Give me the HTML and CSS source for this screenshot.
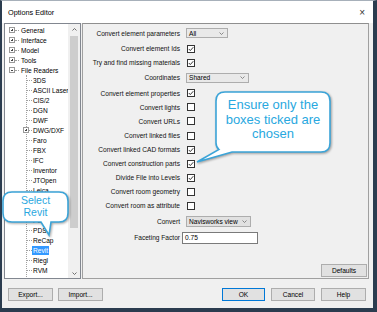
FILE: index.html
```html
<!DOCTYPE html>
<html>
<head>
<meta charset="utf-8">
<link rel="stylesheet" href="styles.css">
</head>
<body>
<div class="window">
  <div class="titlebar"><span class="title">Options Editor</span><span class="close">×</span></div>
  <div class="main">
    <div class="tree">
      <div class="tree-list">
        <div class="node top"><span class="exp plus"></span><span class="dots"></span><span class="lbl">General</span></div>
        <div class="node top"><span class="exp plus"></span><span class="dots"></span><span class="lbl">Interface</span></div>
        <div class="node top"><span class="exp plus"></span><span class="dots"></span><span class="lbl">Model</span></div>
        <div class="node top"><span class="exp plus"></span><span class="dots"></span><span class="lbl">Tools</span></div>
        <div class="node top"><span class="exp minus"></span><span class="dots"></span><span class="lbl">File Readers</span></div>
        <div class="children">
          <div class="node child"><span class="hline"></span><span class="lbl">3DS</span></div>
          <div class="node child"><span class="hline"></span><span class="lbl">ASCII Laser</span></div>
          <div class="node child"><span class="hline"></span><span class="lbl">CIS/2</span></div>
          <div class="node child"><span class="hline"></span><span class="lbl">DGN</span></div>
          <div class="node child"><span class="hline"></span><span class="lbl">DWF</span></div>
          <div class="node child"><span class="exp plus sub"></span><span class="hline"></span><span class="lbl">DWG/DXF</span></div>
          <div class="node child"><span class="hline"></span><span class="lbl">Faro</span></div>
          <div class="node child"><span class="hline"></span><span class="lbl">FBX</span></div>
          <div class="node child"><span class="hline"></span><span class="lbl">IFC</span></div>
          <div class="node child"><span class="hline"></span><span class="lbl">Inventor</span></div>
          <div class="node child"><span class="hline"></span><span class="lbl">JTOpen</span></div>
          <div class="node child"><span class="hline"></span><span class="lbl">Leica</span></div>
          <div class="node child"><span class="hline"></span><span class="lbl">MAN</span></div>
          <div class="node child"><span class="hline"></span><span class="lbl">NX</span></div>
          <div class="node child"><span class="hline"></span><span class="lbl">PDF</span></div>
          <div class="node child"><span class="hline"></span><span class="lbl">PDS</span></div>
          <div class="node child"><span class="hline"></span><span class="lbl">ReCap</span></div>
          <div class="node child"><span class="hline"></span><span class="lbl selected">Revit</span></div>
          <div class="node child"><span class="hline"></span><span class="lbl">Riegl</span></div>
          <div class="node child"><span class="hline"></span><span class="lbl">RVM</span></div>
          <div class="node child"><span class="hline"></span><span class="lbl">SAT</span></div>
        </div>
      </div>
      <div class="vscroll">
        <div class="arrow-box"><svg width="5" height="3" viewBox="0 0 5 3"><polyline points="0.5,2.5 2.5,0.5 4.5,2.5" fill="none" stroke="#606060" stroke-width="0.9"/></svg></div>
        <div class="thumb"></div>
        <div class="spacer"></div>
        <div class="arrow-box"><svg width="5" height="3" viewBox="0 0 5 3"><polyline points="0.5,0.5 2.5,2.5 4.5,0.5" fill="none" stroke="#606060" stroke-width="0.9"/></svg></div>
      </div>
    </div>
    <div class="panel">
      <div class="props">
        <div class="row dd"><span class="lbl-r">Convert element parameters</span><span class="ctl"><span class="dd-box w-all"><span>All</span><svg class="chev" width="5" height="3" viewBox="0 0 5 3"><polyline points="0.5,0.5 2.5,2.5 4.5,0.5" fill="none" stroke="#707070" stroke-width="0.8"/></svg></span></span></div>
        <div class="row"><span class="lbl-r">Convert element Ids</span><span class="ctl"><span class="cb"><svg width="6" height="6" viewBox="0 0 6 6"><polyline points="0.8,3 2.3,4.6 5.3,1.2" fill="none" stroke="#222" stroke-width="0.9"/></svg></span></span></div>
        <div class="row"><span class="lbl-r">Try and find missing materials</span><span class="ctl"><span class="cb"><svg width="6" height="6" viewBox="0 0 6 6"><polyline points="0.8,3 2.3,4.6 5.3,1.2" fill="none" stroke="#222" stroke-width="0.9"/></svg></span></span></div>
        <div class="row dd"><span class="lbl-r">Coordinates</span><span class="ctl"><span class="dd-box w-shared"><span>Shared</span><svg class="chev" width="5" height="3" viewBox="0 0 5 3"><polyline points="0.5,0.5 2.5,2.5 4.5,0.5" fill="none" stroke="#707070" stroke-width="0.8"/></svg></span></span></div>
        <div class="row"><span class="lbl-r">Convert element properties</span><span class="ctl"><span class="cb"><svg width="6" height="6" viewBox="0 0 6 6"><polyline points="0.8,3 2.3,4.6 5.3,1.2" fill="none" stroke="#222" stroke-width="0.9"/></svg></span></span></div>
        <div class="row"><span class="lbl-r">Convert lights</span><span class="ctl"><span class="cb"></span></span></div>
        <div class="row"><span class="lbl-r">Convert URLs</span><span class="ctl"><span class="cb"></span></span></div>
        <div class="row"><span class="lbl-r">Convert linked files</span><span class="ctl"><span class="cb"></span></span></div>
        <div class="row"><span class="lbl-r">Convert linked CAD formats</span><span class="ctl"><span class="cb"><svg width="6" height="6" viewBox="0 0 6 6"><polyline points="0.8,3 2.3,4.6 5.3,1.2" fill="none" stroke="#222" stroke-width="0.9"/></svg></span></span></div>
        <div class="row"><span class="lbl-r">Convert construction parts</span><span class="ctl"><span class="cb"><svg width="6" height="6" viewBox="0 0 6 6"><polyline points="0.8,3 2.3,4.6 5.3,1.2" fill="none" stroke="#222" stroke-width="0.9"/></svg></span></span></div>
        <div class="row"><span class="lbl-r">Divide File into Levels</span><span class="ctl"><span class="cb"><svg width="6" height="6" viewBox="0 0 6 6"><polyline points="0.8,3 2.3,4.6 5.3,1.2" fill="none" stroke="#222" stroke-width="0.9"/></svg></span></span></div>
        <div class="row"><span class="lbl-r">Convert room geometry</span><span class="ctl"><span class="cb"></span></span></div>
        <div class="row"><span class="lbl-r">Convert room as attribute</span><span class="ctl"><span class="cb"></span></span></div>
        <div class="row dd"><span class="lbl-r">Convert</span><span class="ctl"><span class="dd-box w-view"><span>Navisworks view</span><svg class="chev" width="5" height="3" viewBox="0 0 5 3"><polyline points="0.5,0.5 2.5,2.5 4.5,0.5" fill="none" stroke="#707070" stroke-width="0.8"/></svg></span></span></div>
        <div class="row dd"><span class="lbl-r">Faceting Factor</span><span class="ctl"><span class="input">0.75</span></span></div>
      </div>
      <div class="panel-foot"><button class="btn w-defaults">Defaults</button></div>
    </div>
  </div>
  <div class="footer">
    <div class="btn-group left">
      <button class="btn w-export">Export...</button>
      <button class="btn w-import">Import...</button>
    </div>
    <div class="btn-group right">
      <button class="btn default w-ok">OK</button>
      <button class="btn w-cancel">Cancel</button>
      <button class="btn w-help">Help</button>
    </div>
  </div>
</div>

<div class="callout callout-ensure">
  <svg class="bubble" width="152" height="80" viewBox="0 0 152 80"><path d="M 35,4 H 131 Q 140,4 140,13 V 55 Q 140,64 131,64 H 42 L 7,74 L 29,61.5 Q 26,59 26,55 V 13 Q 26,4 35,4 Z" fill="#fff" stroke="#3ba4d8" stroke-width="1.6"/></svg>
  <div class="callout-text">Ensure only the<br>boxes ticked are<br>chosen</div>
</div>

<div class="callout callout-select">
  <svg class="bubble" width="72" height="52" viewBox="0 0 72 52"><path d="M 12,6 H 59 Q 68,6 68,15 V 27 Q 68,36 59,36 H 51 L 49,49 L 41,36 H 12 Q 3,36 3,27 V 15 Q 3,6 12,6 Z" fill="#fff" stroke="#3ba4d8" stroke-width="1.6"/></svg>
  <div class="callout-text">Select<br>Revit</div>
</div>
</body>
</html>
```

FILE: styles.css
```css
body {
  margin: 0;
  width: 377px;
  height: 312px;
  position: relative;
  overflow: hidden;
  font-family: "Liberation Sans", Arial, sans-serif;
  font-size: 6.6px;
  color: #000;
  background: #fff;
}

.window {
  box-sizing: border-box;
  width: 377px;
  height: 312px;
  display: flex;
  flex-direction: column;
  background: #f0f0f0;
  border-style: solid;
  border-color: #2b3c4f;
  border-top-color: #a7b0ba;
  border-width: 1px 4px 4px 2px;
}

.titlebar {
  height: 22px;
  flex: none;
  background: #fff;
  display: flex;
  align-items: center;
  justify-content: space-between;
  padding: 0 8px 0 6px;
  font-size: 7.3px;
}

.close {
  font-size: 10px;
  color: #333;
}

.main {
  height: 256px;
  flex: none;
  display: flex;
  gap: 1px;
  padding: 0 4px 0 2px;
}

/* Tree */
.tree {
  width: 77px;
  flex: none;
  box-sizing: border-box;
  border: 1px solid #828790;
  background: #fff;
  display: flex;
  overflow: hidden;
}

.tree-list {
  flex: 1;
  overflow: hidden;
  padding-top: 1px;
}

.node {
  height: 10px;
  display: flex;
  align-items: center;
  white-space: nowrap;
  position: relative;
}

.node.top {
  padding-left: 4px;
}

.exp {
  width: 6px;
  height: 6px;
  box-sizing: border-box;
  border: 1px solid #9a9a9a;
  background: #fff;
  position: relative;
  flex: none;
}

.exp::before {
  content: "";
  position: absolute;
  left: 1px;
  top: 1.5px;
  width: 2px;
  height: 1px;
  background: #444;
}

.exp.plus::after {
  content: "";
  position: absolute;
  left: 1.5px;
  top: 1px;
  width: 1px;
  height: 2px;
  background: #444;
}

.exp.sub {
  position: absolute;
  left: -4px;
  top: 2px;
}

.dots {
  width: 4px;
  border-top: 1px dotted #a0a0a0;
  margin-right: 1px;
  flex: none;
}

.children {
  margin-left: 21px;
  border-left: 1px dotted #a0a0a0;
}

.hline {
  width: 5px;
  border-top: 1px dotted #a0a0a0;
  flex: none;
}

.lbl {
  padding: 0 1px;
  line-height: 9px;
  height: 9px;
}

.lbl.selected {
  background: #3399ff;
  color: #fff;
}

.vscroll {
  width: 12px;
  flex: none;
  background: #f0f0f0;
  display: flex;
  flex-direction: column;
  align-items: center;
}

.arrow-box {
  height: 10px;
  display: flex;
  align-items: center;
  justify-content: center;
  flex: none;
}

.thumb {
  width: 8px;
  height: 192px;
  margin-top: 2px;
  background: #cdcdcd;
  flex: none;
}

.spacer {
  flex: 1;
}

/* Property panel */
.panel {
  flex: 1;
  box-sizing: border-box;
  border: 1px solid #a0a0a0;
  border-top-color: #8f8f8f;
  display: flex;
  flex-direction: column;
}

.props {
  padding-top: 1px;
}

.row {
  height: 14.1px;
  display: flex;
  align-items: center;
}

.row.dd {
  height: 16.5px;
}

.lbl-r {
  width: 97px;
  flex: none;
  text-align: right;
  white-space: nowrap;
  color: #111;
}

.ctl {
  margin-left: 6px;
  display: flex;
  align-items: center;
}

.cb {
  width: 8px;
  height: 8px;
  box-sizing: border-box;
  border: 1px solid #333;
  background: #fff;
  margin-left: 1px;
  display: flex;
  align-items: center;
  justify-content: center;
}

.dd-box {
  height: 10px;
  box-sizing: border-box;
  border: 1px solid #adadad;
  background: #e9e9e9;
  display: flex;
  align-items: center;
  justify-content: space-between;
  padding: 0 3px 0 2px;
  white-space: nowrap;
}

.w-all { width: 42px; }
.w-shared { width: 63px; }
.w-view { width: 65px; height: 11px; background: #e1e1e1; }

.input {
  width: 76px;
  height: 12px;
  box-sizing: border-box;
  border: 1px solid #7a7a7a;
  background: #fff;
  margin-left: -4px;
  padding-left: 2px;
  display: flex;
  align-items: center;
}

.panel-foot {
  margin-top: auto;
  display: flex;
  justify-content: flex-end;
  padding: 0 1px 1px 0;
}

/* Buttons */
.btn {
  font-family: inherit;
  font-size: 6.6px;
  color: #000;
  height: 13px;
  padding: 0;
  box-sizing: border-box;
  border: 1px solid #adadad;
  background: #e1e1e1;
  display: flex;
  align-items: center;
  justify-content: center;
}

.btn.default {
  border-color: #0078d7;
}

.w-defaults { width: 46px; }
.w-export { width: 45px; }
.w-import { width: 45px; }
.w-ok { width: 43px; }
.w-cancel { width: 44px; }
.w-help { width: 45px; }

.footer {
  flex: 1;
  display: flex;
  justify-content: space-between;
  align-items: flex-start;
  padding: 9px 7px 0 6px;
}

.btn-group {
  display: flex;
}

.btn-group.left { gap: 5px; }
.btn-group.right { gap: 6px; }

/* Callouts */
.callout {
  position: absolute;
}

.bubble {
  position: absolute;
  left: 0;
  top: 0;
  filter: drop-shadow(1px 1px 1px rgba(0, 0, 0, 0.35));
}

.callout-text {
  position: absolute;
  display: flex;
  align-items: center;
  justify-content: center;
  text-align: center;
  color: #29a8e0;
  font-family: "Liberation Sans", Arial, sans-serif;
}

.callout-ensure {
  left: 190px;
  top: 88px;
  width: 152px;
  height: 80px;
}

.callout-ensure .callout-text {
  left: 26px;
  top: 4px;
  width: 114px;
  height: 56px;
  font-size: 13px;
  line-height: 14.5px;
}

.callout-select {
  left: 0;
  top: 186px;
  width: 72px;
  height: 52px;
}

.callout-select .callout-text {
  left: 3px;
  top: 6px;
  width: 65px;
  height: 30px;
  font-size: 10.5px;
  line-height: 11.6px;
}
```
